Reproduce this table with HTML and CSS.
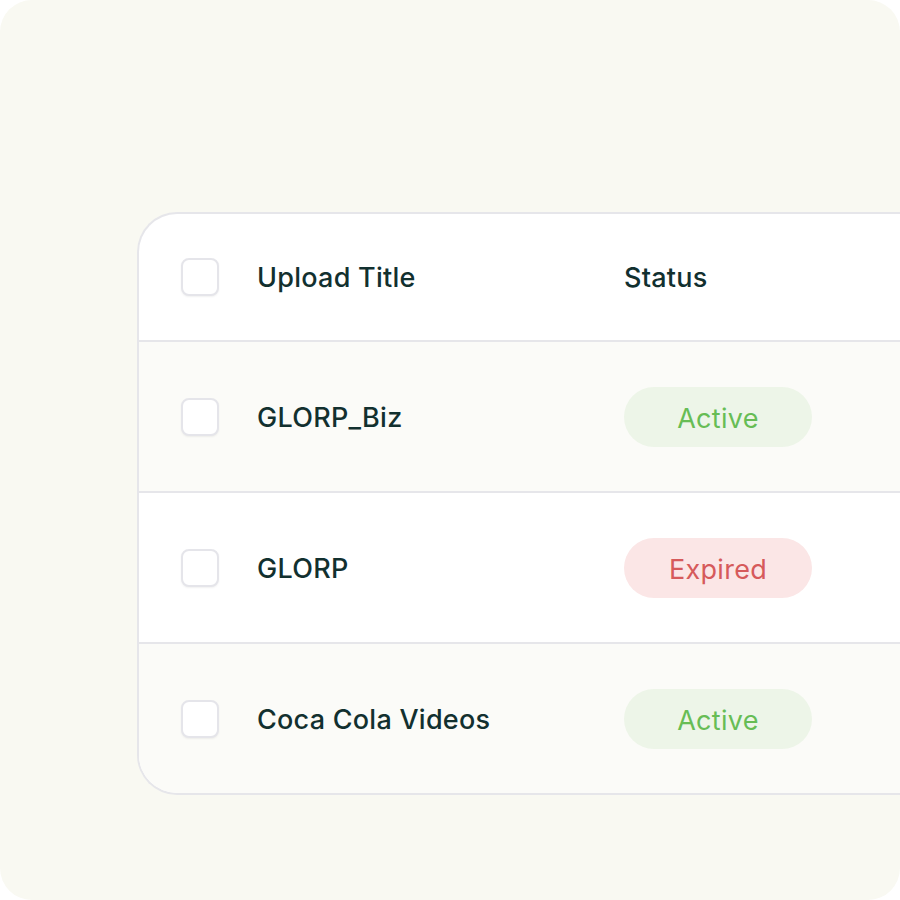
FILE: index.html
```html
<!DOCTYPE html>
<html>
<head>
<meta charset="utf-8">
<link rel="stylesheet" href="styles.css">
</head>
<body>
<div class="frame">
  <div class="card">
    <div class="row head">
      <span class="check"></span>
      <span class="title">Upload Title</span>
      <span class="status">Status</span>
    </div>
    <div class="row alt">
      <span class="check"></span>
      <span class="title">GLORP_Biz</span>
      <span class="status"><span class="badge active">Active</span></span>
    </div>
    <div class="row">
      <span class="check"></span>
      <span class="title">GLORP</span>
      <span class="status"><span class="badge expired">Expired</span></span>
    </div>
    <div class="row alt last">
      <span class="check"></span>
      <span class="title">Coca Cola Videos</span>
      <span class="status"><span class="badge active">Active</span></span>
    </div>
  </div>
</div>
</body>
</html>
```
FILE: styles.css
```css
html, body {
  margin: 0;
  padding: 0;
  background: #ffffff;
}
.frame {
  width: 900px;
  height: 900px;
  background: #f9f9f2;
  border-radius: 32px;
  overflow: hidden;
  padding: 212px 0 0 137px;
  box-sizing: border-box;
}
.card {
  width: 820px;
  background: #ffffff;
  border: 2px solid #e6e6ea;
  border-right: none;
  border-radius: 40px 0 0 40px;
  overflow: hidden;
  font-family: Inter, "Noto Sans", sans-serif;
  color: #12302f;
}
.row {
  display: flex;
  align-items: center;
  height: 151px;
  border-bottom: 2px solid #e6e6ea;
  box-sizing: border-box;
  padding-left: 42px;
  padding-top: 2px;
}
.row.head {
  height: 128px;
  padding-top: 1px;
}
.row.last {
  border-bottom: none;
  height: 149px;
}
.row.alt {
  background: #fbfbf8;
}
.check {
  width: 34px;
  height: 34px;
  border: 2px solid #e5e5ea;
  border-radius: 8px;
  background: #ffffff;
  box-shadow: 0 1px 2px rgba(0,0,0,0.06);
  flex: none;
  margin-top: -2px;
}
.title {
  margin-left: 38px;
  width: 367px;
  font-size: 27px;
  font-weight: 500;
  letter-spacing: 0.25px;
}
.status {
  font-size: 27px;
  font-weight: 500;
  letter-spacing: 0.25px;
}
.badge {
  display: inline-flex;
  align-items: center;
  justify-content: center;
  width: 188px;
  height: 60px;
  box-sizing: border-box;
  padding-top: 3px;
  border-radius: 30px;
  font-size: 27px;
  font-weight: 400;
  letter-spacing: 0.3px;
  margin-top: -2px;
}
.badge.active {
  background: #edf5e8;
  color: #67bd55;
}
.badge.expired {
  background: #fbe6e6;
  color: #d65a5b;
}
```
